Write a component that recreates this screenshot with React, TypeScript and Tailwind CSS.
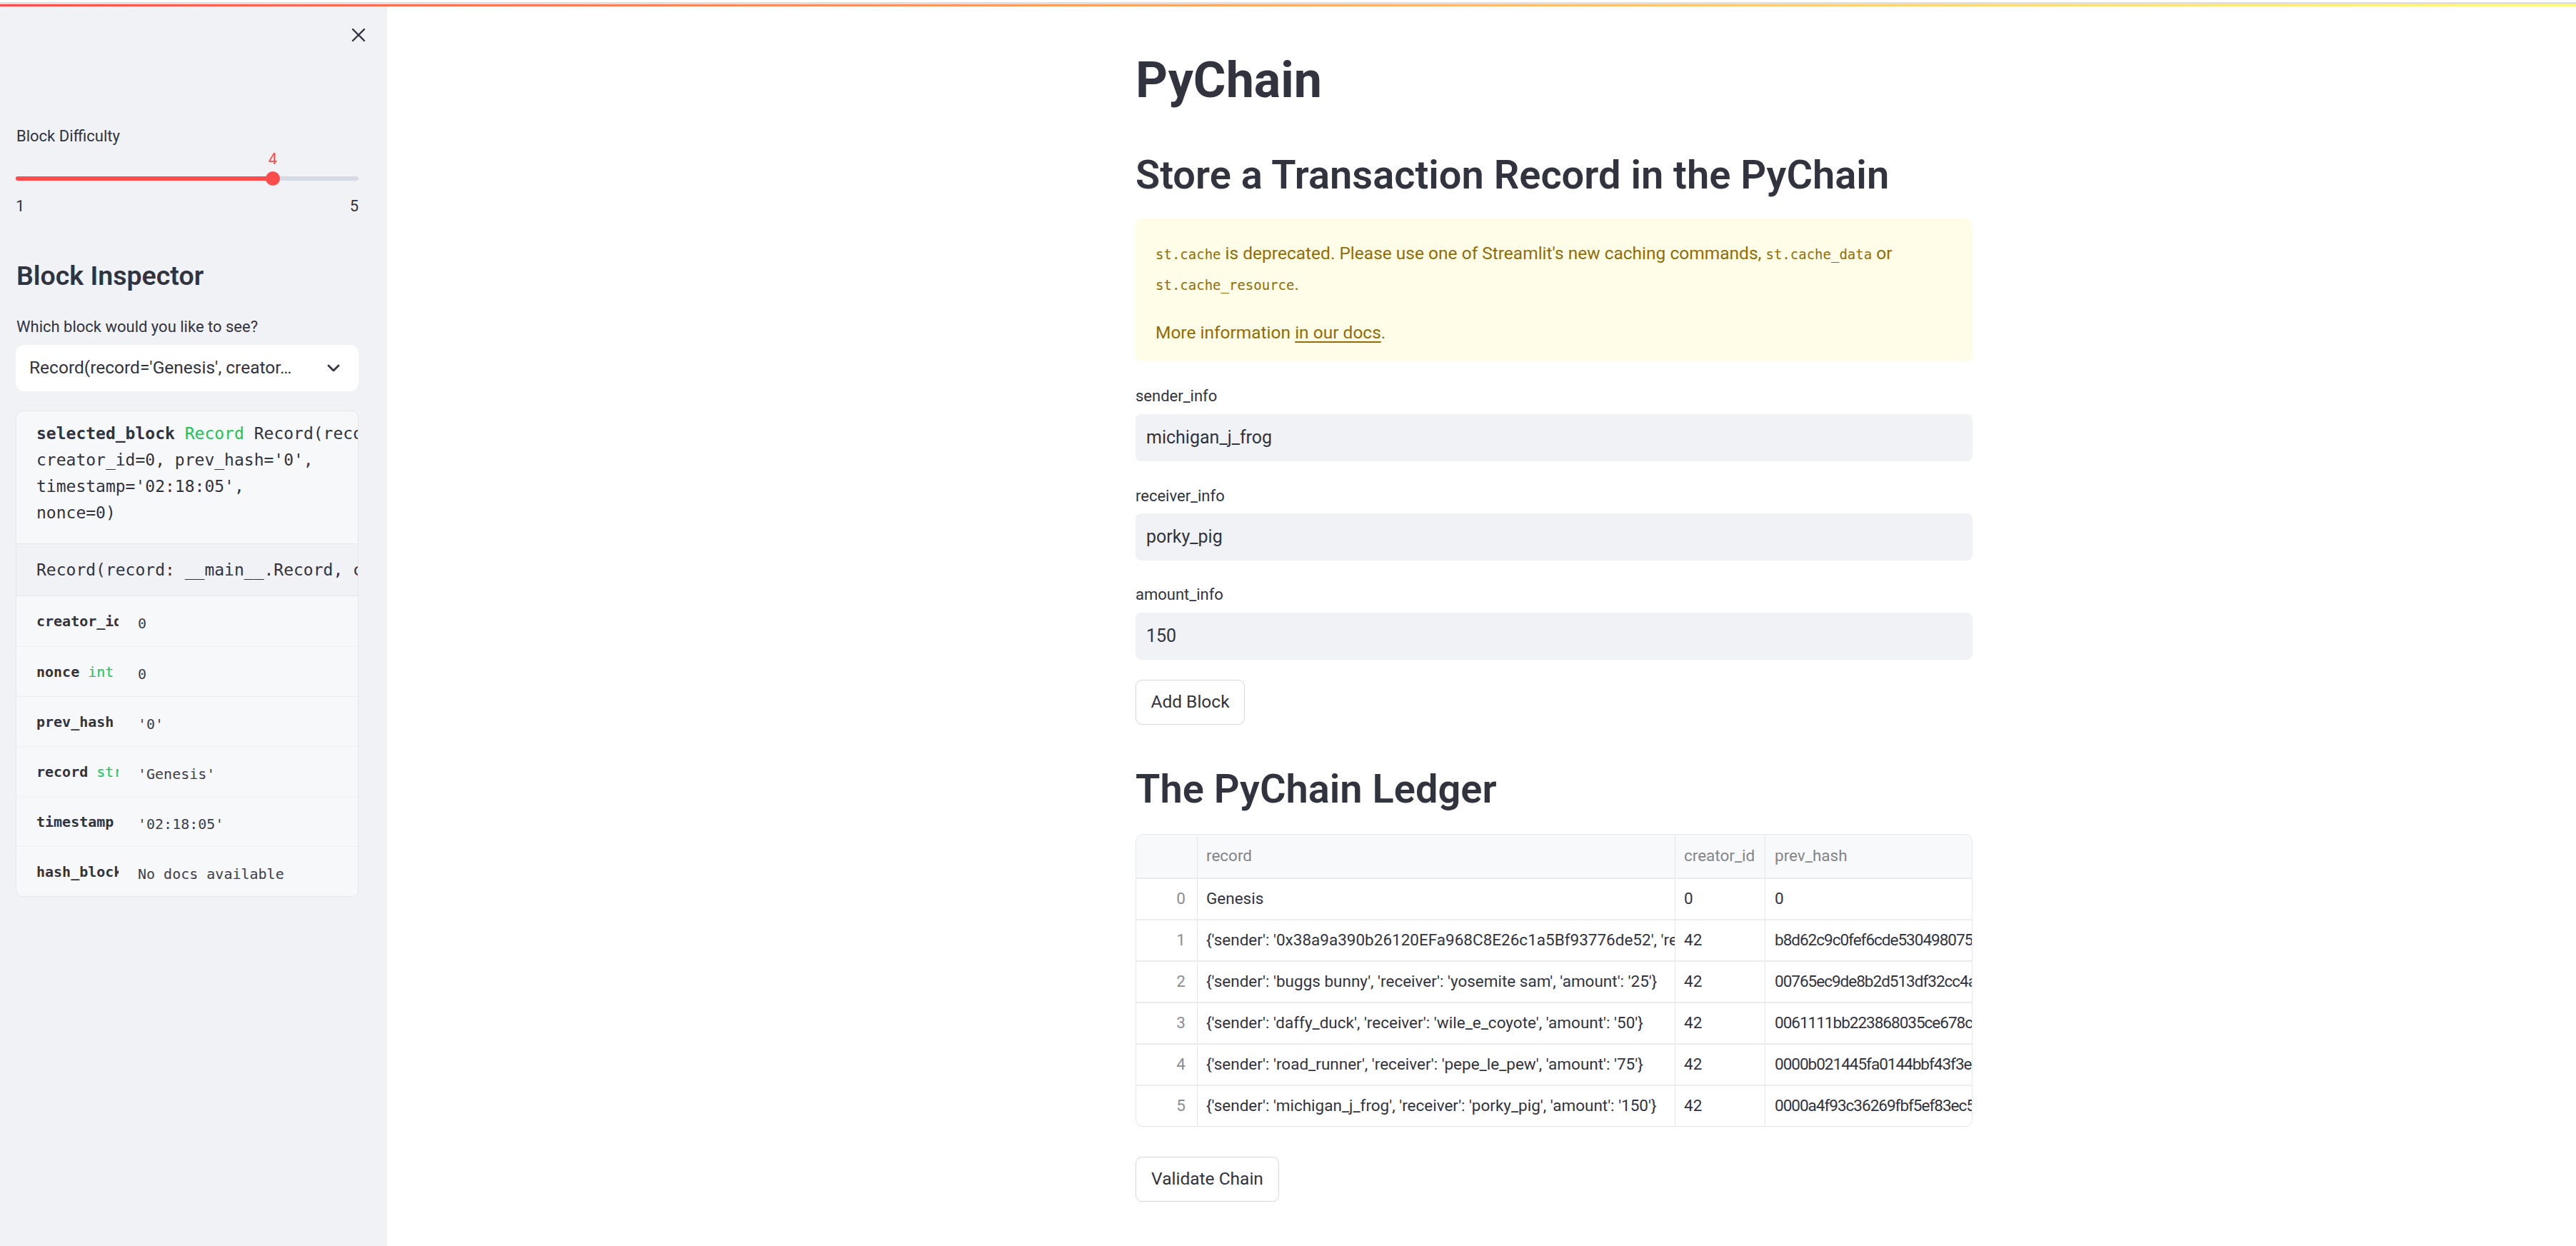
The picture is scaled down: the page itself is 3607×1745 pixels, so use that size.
import React from "react";

const sans = "font-['Roboto',sans-serif]";
const mono = "font-['DejaVu_Sans_Mono',monospace]";

const ledger = [
  { idx: 0, record: "Genesis", creator: "0", prev: "0" },
  {
    idx: 1,
    record:
      "{'sender': '0x38a9a390b26120EFa968C8E26c1a5Bf93776de52', 'receiver': '0x2C8dA7a0c5c5E6b1', 'amount': '10'}",
    creator: "42",
    prev: "b8d62c9c0fef6cde5304980754a1c",
  },
  {
    idx: 2,
    record: "{'sender': 'buggs bunny', 'receiver': 'yosemite sam', 'amount': '25'}",
    creator: "42",
    prev: "00765ec9de8b2d513df32cc4a7e10",
  },
  {
    idx: 3,
    record: "{'sender': 'daffy_duck', 'receiver': 'wile_e_coyote', 'amount': '50'}",
    creator: "42",
    prev: "0061111bb223868035ce678c92f0e",
  },
  {
    idx: 4,
    record: "{'sender': 'road_runner', 'receiver': 'pepe_le_pew', 'amount': '75'}",
    creator: "42",
    prev: "0000b021445fa0144bbf43f3e81d2",
  },
  {
    idx: 5,
    record: "{'sender': 'michigan_j_frog', 'receiver': 'porky_pig', 'amount': '150'}",
    creator: "42",
    prev: "0000a4f93c36269fbf5ef83ec5b97",
  },
];

const fields = [
  { key: "creator_id", type: "", val: "0" },
  { key: "nonce", type: "int", val: "0" },
  { key: "prev_hash", type: "", val: "'0'" },
  { key: "record", type: "str", val: "'Genesis'" },
  { key: "timestamp", type: "", val: "'02:18:05'" },
  { key: "hash_block", type: "", val: "No docs available" },
];

const Slider = ({ value, min, max }: { value: number; min: number; max: number }) => {
  const pct = ((value - min) / (max - min)) * 100;
  return (
    <div className="mt-[6px] h-[90px]">
      <div className="relative h-[26px]">
        <span
          className="absolute top-0 -translate-x-1/2 text-[22px] leading-[26px] text-[#ff4b4b]"
          style={{ left: `${pct}%` }}
        >
          {value}
        </span>
      </div>
      <div className="relative mt-[11px] h-[6px] rounded-full bg-[#d5dae5]">
        <div className="h-full rounded-full bg-[#ff4b4b]" style={{ width: `${pct}%` }} />
        <div
          className="absolute top-1/2 h-[20px] w-[20px] -translate-x-1/2 -translate-y-1/2 rounded-full bg-[#ff4b4b]"
          style={{ left: `${pct}%` }}
        />
      </div>
      <div className="mt-[23px] flex h-[24px] items-center justify-between text-[22px] text-[#31333f]">
        <span>{min}</span>
        <span>{max}</span>
      </div>
    </div>
  );
};

const Sidebar = () => (
  <aside className={`flex w-[542px] shrink-0 flex-col bg-[#f0f2f6] pl-[22px] pr-[40px] text-[#31333f] ${sans}`}>
    <div className="-mr-[30px] flex h-[80px] items-center justify-end pr-[20px]">
      <svg width="20" height="20" viewBox="0 0 20 20" fill="none" stroke="#31333f" strokeWidth="2.4" strokeLinecap="round">
        <path d="M2 2L18 18M18 2L2 18" />
      </svg>
    </div>
    <div className="mt-[87px] flex h-[28px] items-center pl-[1px] text-[22px]">Block Difficulty</div>
    <Slider value={4} min={1} max={5} />
    <div className="mt-[66px] flex h-[40px] items-center pl-[1px] text-[37.5px] font-semibold">Block Inspector</div>
    <div className="mt-[38px] flex h-[26px] items-center pl-[1px] text-[22px]">Which block would you like to see?</div>
    <div className="mt-[13px] flex h-[65px] items-center rounded-[12px] bg-white pl-[19px] pr-[26px]">
      <span className="min-w-0 flex-1 whitespace-nowrap text-[24.5px]">Record(record='Genesis', creator…</span>
      <svg width="18" height="11" viewBox="0 0 18 11" fill="none" stroke="#31333f" strokeWidth="2.8" strokeLinecap="round" strokeLinejoin="round">
        <path d="M2 2L9 9L16 2" />
      </svg>
    </div>
    <div className={`mt-[27px] overflow-hidden rounded-[10px] border border-[#e4e7ee] bg-[#f7f8fa] ${mono}`}>
      <div className="whitespace-pre pb-[24px] pl-[28px] pt-[13px] text-[23px] leading-[37px] text-[#31333f]">
        <div>
          <span className="font-bold">selected_block</span> <span className="text-[#21c354]">Record</span>{" "}
          Record(record='Genesis',
        </div>
        <div>creator_id=0, prev_hash='0',</div>
        <div>timestamp='02:18:05',</div>
        <div>nonce=0)</div>
      </div>
      <div className="flex h-[74px] items-center whitespace-pre border-y border-[#e4e7ee] bg-[#f0f2f6] pl-[28px] text-[23px]">
        Record(record: __main__.Record, creator_id: int, prev_hash: str = '0')
      </div>
      {fields.map((f, i) => (
        <div
          key={f.key}
          className={`flex h-[70px] items-center pl-[28px] text-[20px] ${i > 0 ? "border-t border-[#eceef3]" : ""}`}
        >
          <div className="w-[115px] shrink-0 overflow-hidden whitespace-pre">
            <span className="font-bold">{f.key}</span>
            {f.type && <span className="text-[#21c354]"> {f.type}</span>}
          </div>
          <div className="ml-[27px] mt-[6px] whitespace-pre text-[#3d3f4a]">{f.val}</div>
        </div>
      ))}
    </div>
  </aside>
);

const Field = ({ label, value, mt, gap }: { label: string; value: string; mt: string; gap: string }) => (
  <>
    <div className={`${mt} flex h-[28px] items-center text-[22px]`}>{label}</div>
    <div className={`${gap} flex h-[66px] items-center rounded-[8px] bg-[#f0f2f6] pl-[15px] text-[25px]`}>{value}</div>
  </>
);

const Button = ({ label, w, mt }: { label: string; w: string; mt: string }) => (
  <button
    className={`${mt} ${w} flex h-[63px] items-center justify-center rounded-[9px] border border-[#d6d6db] bg-white text-[24.5px] text-[#31333f]`}
  >
    {label}
  </button>
);

const Ledger = () => (
  <div className="mt-[33px] overflow-hidden rounded-[10px] border border-[#e6e7eb] text-[22.5px]">
    <div className="flex h-[60px] bg-[#f8f9fb] text-[#83858c]">
      <div className="w-[86px] shrink-0 border-r border-[#e6e7eb]" />
      <div className="flex w-[669px] shrink-0 items-center border-r border-[#e6e7eb] pl-[12px]">record</div>
      <div className="flex w-[126px] shrink-0 items-center overflow-hidden whitespace-nowrap border-r border-[#e6e7eb] pl-[12px]">
        creator_id
      </div>
      <div className="flex flex-1 items-center whitespace-nowrap pl-[13px]">prev_hash</div>
    </div>
    {ledger.map((r) => (
      <div key={r.idx} className="flex h-[58px] border-t-2 border-[#ebecf0]">
        <div className="flex w-[86px] shrink-0 items-center justify-end border-r border-[#e6e7eb] pr-[16px] text-[#8b8d95]">
          {r.idx}
        </div>
        <div className="flex w-[669px] shrink-0 items-center overflow-hidden whitespace-nowrap border-r border-[#e6e7eb] pl-[12px]">
          {r.record}
        </div>
        <div className="flex w-[126px] shrink-0 items-center border-r border-[#e6e7eb] pl-[12px]">{r.creator}</div>
        <div className="flex min-w-0 flex-1 items-center overflow-hidden whitespace-nowrap pl-[13px] tracking-[-1px]">
          {r.prev}
        </div>
      </div>
    ))}
  </div>
);

const Main = () => (
  <main className={`min-w-0 flex-1 bg-white text-[#31333f] ${sans}`}>
    <div className="ml-[1048px] flex w-[1172px] flex-col items-start">
      <h1 className="mt-[63px] flex h-[80px] items-center text-[70px] font-bold">PyChain</h1>
      <h2 className="mt-[63px] flex h-[60px] items-center text-[56px] font-semibold">
        Store a Transaction Record in the PyChain
      </h2>
      <div className="mt-[31px] h-[200px] w-full rounded-[8px] bg-[#fffce7] px-[28px] pt-[28px] text-[24.5px] leading-[41px] text-[#926c05]">
        <p className="whitespace-nowrap">
          <code className={`${mono} text-[19px]`}>st.cache</code> is deprecated. Please use one of Streamlit's new caching
          commands, <code className={`${mono} text-[19px]`}>st.cache_data</code> or
          <br />
          <code className={`${mono} text-[19px]`}>st.cache_resource</code>.
        </p>
        <p className="mt-[25px]">
          More information <span className="underline underline-offset-[4px]">in our docs</span>.
        </p>
      </div>
      <div className="w-full">
        <Field label="sender_info" value="michigan_j_frog" mt="mt-[34px]" gap="mt-[12px]" />
        <Field label="receiver_info" value="porky_pig" mt="mt-[34px]" gap="mt-[11px]" />
        <Field label="amount_info" value="150" mt="mt-[33px]" gap="mt-[12px]" />
      </div>
      <Button label="Add Block" w="w-[153px]" mt="mt-[28px]" />
      <h2 className="mt-[60px] flex h-[60px] items-center text-[56px] font-semibold">The PyChain Ledger</h2>
      <div className="w-full">
        <Ledger />
      </div>
      <Button label="Validate Chain" w="w-[201px]" mt="mt-[42px]" />
    </div>
  </main>
);

export default function App() {
  return (
    <div className="flex h-screen w-full flex-col overflow-hidden bg-white">
      <div className="h-[3px] shrink-0 bg-white" />
      <div className="h-[3px] shrink-0 bg-[#dfdfdf]" />
      <div className="h-[3px] shrink-0 bg-gradient-to-r from-[#ff4b4b] to-[#fffd80]" />
      <div className="flex min-h-0 flex-1">
        <Sidebar />
        <Main />
      </div>
    </div>
  );
}
